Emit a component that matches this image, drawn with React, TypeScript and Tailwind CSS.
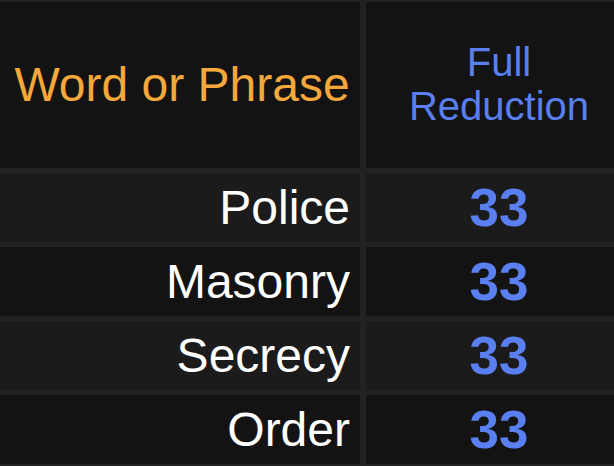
import { Fragment } from 'react';

export default function App() {
    const rows = [
        { word: 'Police', value: 33 },
        { word: 'Masonry', value: 33 },
        { word: 'Secrecy', value: 33 },
        { word: 'Order', value: 33 },
    ];

    return (
        <div className="w-[614px] h-[466px] overflow-hidden bg-[#222222] font-['Liberation_Sans',Arial,sans-serif]">
            <div className="w-[632px] pt-[2px] grid grid-cols-[360px_266px] gap-x-[6px] gap-y-[5px]">
                <div className="h-[166px] bg-[#131313] flex items-center justify-center pl-[4px] text-[48px] text-[#f5a83b]">
                    Word or Phrase
                </div>
                <div className="h-[166px] bg-[#131313] flex flex-col items-center justify-center pb-[2px] text-[40px] leading-[44px] text-[#5a7ff0]">
                    <span>Full</span>
                    <span>Reduction</span>
                </div>
                {rows.map((row, i) => (
                    <Fragment key={row.word}>
                        <div
                            className={`h-[69px] flex items-center justify-end pr-[10px] text-[48px] text-white ${i % 2 === 0 ? 'bg-[#1b1b1b]' : 'bg-[#131313]'}`}
                        >
                            {row.word}
                        </div>
                        <div
                            className={`h-[69px] flex items-center justify-center text-[53px] font-bold text-[#5a7ff0] ${i % 2 === 0 ? 'bg-[#1b1b1b]' : 'bg-[#131313]'}`}
                        >
                            {row.value}
                        </div>
                    </Fragment>
                ))}
            </div>
        </div>
    );
}
